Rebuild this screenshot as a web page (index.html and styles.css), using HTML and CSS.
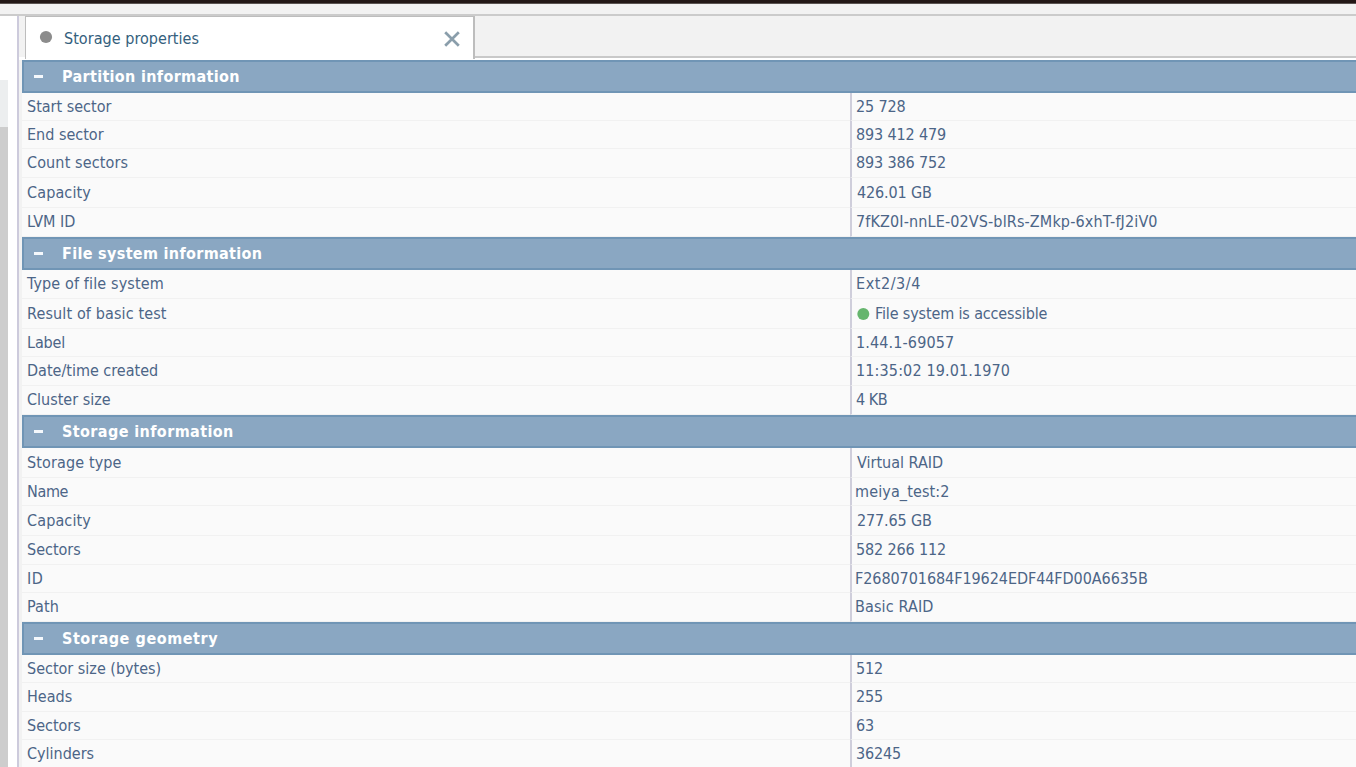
FILE: index.html
```
<!DOCTYPE html>
<html lang="en">
<head>
<meta charset="utf-8">
<title>Storage properties</title>
<link rel="stylesheet" href="styles.css">
</head>
<body>
<div class="window-edge"></div>
<div class="toolbar"></div>
<div class="workspace">
  <aside class="scroll-pane"><div class="track"></div><div class="thumb"></div></aside>
  <main class="panel">
    <div class="tabs">
      <div class="tab">
        <svg class="dot" width="14" height="14" viewBox="0 0 14 14"><circle cx="7" cy="7" r="6.1" fill="#8c8c8c"/></svg>
        <span class="tab-title">Storage properties</span>
        <svg class="close" width="18" height="18" viewBox="0 0 18 18"><path d="M2.2 2.2 15.8 15.8M15.8 2.2 2.2 15.8" fill="none" stroke="#8a9eab" stroke-width="2.7"/></svg>
      </div>
      <div class="tab-rest"></div>
    </div>
    <div class="grid">
      <h2 class="group"><i class="minus"></i><span>Partition information</span></h2>
      <div class="row h28"><span class="name">Start sector</span><span class="value tight">25 728</span></div>
      <div class="row h28"><span class="name">End sector</span><span class="value tight">893 412 479</span></div>
      <div class="row h29"><span class="name wide">Count sectors</span><span class="value tight">893 386 752</span></div>
      <div class="row h30"><span class="name wide">Capacity</span><span class="value inset tight">426.01 GB</span></div>
      <div class="row h29"><span class="name">LVM ID</span><span class="value wide">7fKZ0I-nnLE-02VS-blRs-ZMkp-6xhT-fJ2iV0</span></div>

      <h2 class="group"><i class="minus"></i><span>File system information</span></h2>
      <div class="row h29"><span class="name wide">Type of file system</span><span class="value widest">Ext2/3/4</span></div>
      <div class="row h30"><span class="name wide">Result of basic test</span><span class="value inset tight"><svg class="status" width="13" height="14" viewBox="0 0 13 14"><circle cx="6.3" cy="7" r="6" fill="#66b56e"/></svg>File system is accessible</span></div>
      <div class="row h28"><span class="name tight">Label</span><span class="value wide">1.44.1-69057</span></div>
      <div class="row h29"><span class="name">Date/time created</span><span class="value wide">11:35:02 19.01.1970</span></div>
      <div class="row h29"><span class="name">Cluster size</span><span class="value tightest">4 KB</span></div>

      <h2 class="group"><i class="minus"></i><span class="wider">Storage information</span></h2>
      <div class="row h30"><span class="name wide">Storage type</span><span class="value inset">Virtual RAID</span></div>
      <div class="row h28"><span class="name tighter">Name</span><span class="value out wide">meiya_test:2</span></div>
      <div class="row h30"><span class="name wide">Capacity</span><span class="value inset tight">277.65 GB</span></div>
      <div class="row h29"><span class="name">Sectors</span><span class="value tight">582 266 112</span></div>
      <div class="row h28"><span class="name widest">ID</span><span class="value out snug">F2680701684F19624EDF44FD00A6635B</span></div>
      <div class="row h29"><span class="name wide">Path</span><span class="value out wide">Basic RAID</span></div>

      <h2 class="group"><i class="minus"></i><span class="widest">Storage geometry</span></h2>
      <div class="row h28"><span class="name">Sector size (bytes)</span><span class="value tight">512</span></div>
      <div class="row h29"><span class="name">Heads</span><span class="value tight">255</span></div>
      <div class="row h28"><span class="name">Sectors</span><span class="value tight">63</span></div>
      <div class="row h29"><span class="name">Cylinders</span><span class="value tight">36245</span></div>
    </div>
  </main>
</div>
</body>
</html>
```
FILE: styles.css
```
* { box-sizing: border-box; }
body {
  margin: 0;
  height: 767px;
  overflow: hidden;
  display: flex;
  flex-direction: column;
  background: #fff;
  color: #4c6587;
  font: 16px/20px "DejaVu Sans Condensed", "DejaVu Sans", sans-serif;
}
.window-edge { height: 4px; flex: none; background: #231816; border-bottom: 1px solid #5a5351; }
.toolbar { height: 12px; flex: none; background: #f2f2f2; border-bottom: 2px solid #cbcbcb; }
.workspace { flex: 1; min-height: 0; display: flex; }

.scroll-pane { width: 17px; flex: none; display: flex; flex-direction: column; padding-top: 64px; background: #fff; }
.track { width: 8px; height: 47px; flex: none; background: #eceeef; }
.thumb { width: 8px; flex: 1; background: #cdcdcd; }

.panel { flex: 1; min-width: 0; border-left: 2px solid #cdcbdc; background: #f2f2f2; }
.tabs { display: flex; height: 44px; padding-left: 6px; background: linear-gradient(#f2f2f2 41px, #fff 41px); }
.tab {
  display: flex;
  align-items: center;
  width: 450px;
  height: 43px;
  padding: 0 12px 0 13px;
  background: #fff;
  border: 1px solid #bdbdbd;
  border-width: 1px 2px 0 1px;
}
.dot { flex: none; margin-top: -3px; }
.tab-title { flex: 1; padding: 2px 0 0 11px; color: #34607d; letter-spacing: .04px; }
.close { flex: none; margin-top: 1px; }
.tab-rest { flex: 1; height: 42px; border-bottom: 2px solid #c9c9c9; }

.grid { margin-left: 3px; background: #fafafa; }
.group {
  display: flex;
  align-items: center;
  height: 33px;
  margin: 0;
  padding-left: 10px;
  background: #8aa7c2;
  border: 2px solid #7095b5;
  border-width: 2px 0 2px 2px;
  color: #fff;
  font-size: 16px;
  line-height: 20px;
  letter-spacing: .33px;
}
.minus { width: 9px; height: 3px; margin-right: 19px; background: #f4f8fc; }

.row { display: flex; }
.name, .value { border-bottom: 1px solid #f1f1f1; display: flex; align-items: center; white-space: pre; }
.name { width: 828px; flex: none; padding-left: 5px; }
.value { flex: 1; padding-left: 4px; border-left: 2px solid #cfcedb; }
.inset { padding-left: 5px; }
.out { padding-left: 3px; }
.status { margin-right: 5px; flex: none; }
.h28 { height: 28px; }
.h29 { height: 29px; }
.h30 { height: 30px; }

.tightest { letter-spacing: -.5px; }
.tighter { letter-spacing: -.35px; }
.tight { letter-spacing: -.14px; }
.snug { letter-spacing: -.06px; }
.wide { letter-spacing: .13px; }
.wider { letter-spacing: .4px; }
.widest { letter-spacing: .56px; }
```
